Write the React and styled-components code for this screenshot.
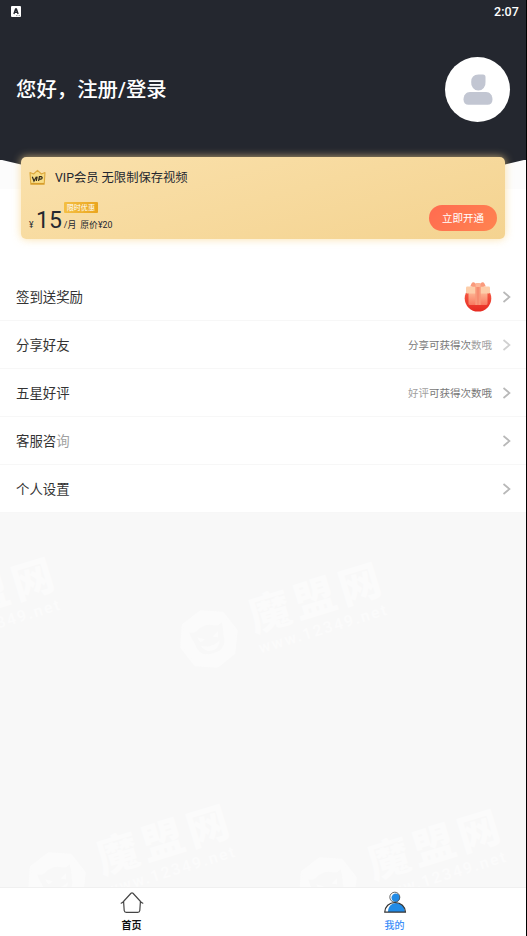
import React from 'react'
import styled, { createGlobalStyle } from 'styled-components'

const menu = [
  { id: 'sign', label: '签到送奖励', gift: true },
  { id: 'share', label: '分享好友', hint: ['', '分享可获得次', '数哦'], pale: true },
  { id: 'rate', label: '五星好评', hint: ['好评', '可获得次数哦', ''] },
  { id: 'service', label: '客服咨', fade: '询' },
  { id: 'settings', label: '个人设置' },
]

const marks = [
  { x: -118, y: 121 },
  { x: 209, y: 126 },
  { x: 57, y: 368 },
  { x: 328, y: 373 },
]

const App = () => {
  const [tab, setTab] = React.useState('mine')

  return (
    <Screen>
      <GlobalStyle />
      <Header>
        <StatusBar>
          <KeyboardIcon />
          <Clock>2:07</Clock>
        </StatusBar>
        <Profile>
          <Greeting>您好，注册/登录</Greeting>
          <Avatar>
            <AvatarIcon />
          </Avatar>
        </Profile>
      </Header>

      <VipCard>
        <VipTitle>
          <CrownIcon />
          VIP会员 无限制保存视频
        </VipTitle>
        <VipBottom>
          <Price>
            <Currency>¥</Currency>
            <Amount>15</Amount>
            <PriceSide>
              <Tag>限时优惠</Tag>
              <Unit>/月<span>原价¥20</span></Unit>
            </PriceSide>
          </Price>
          <OpenButton>立即开通</OpenButton>
        </VipBottom>
      </VipCard>

      <Menu>
        {menu.map((item) => (
          <MenuRow key={item.id}>
            <Label>{item.label}{item.fade && <Faded>{item.fade}</Faded>}</Label>
            {item.gift && <GiftIcon />}
            {item.hint && (
              <Hint>
                <Faded>{item.hint[0]}</Faded>{item.hint[1]}<Faded>{item.hint[2]}</Faded>
              </Hint>
            )}
            <Chevron pale={item.pale} />
          </MenuRow>
        ))}
      </Menu>

      <Empty>
        {marks.map((m, i) => (
          <Watermark key={i + 'w'} $x={m.x} $y={m.y}>
            <MarkLogo />
            <div>
              <MarkName>魔盟网</MarkName>
              <MarkUrl>www.12349.net</MarkUrl>
            </div>
          </Watermark>
        ))}
      </Empty>

      <TabBar>
        <Tab onClick={() => setTab('home')} $active={tab === 'home'}>
          <HomeIcon />
          首页
        </Tab>
        <Tab onClick={() => setTab('mine')} $active={tab === 'mine'}>
          <MineIcon />
          我的
        </Tab>
      </TabBar>
    </Screen>
  )
}

export default App

const KeyboardIcon = () => (
  <svg width="10" height="11" viewBox="0 0 10 11">
    <rect width="10" height="11" rx="1" fill="#fff" />
    <path d="M2.9 8 4.6 3h.8l1.7 5M3.6 6.3h2.8" fill="none" stroke="#24272f" strokeWidth="1.4" />
    <path d="M5 9.6h4" stroke="#777a80" strokeWidth=".7" strokeDasharray="1 .5" />
  </svg>
)

const AvatarIcon = () => (
  <svg width="30" height="32" viewBox="0 0 30 32">
    <path d="M15.5 .5H20q2.500 0 2.500 2.500V8a7.200 7.700 0 1 1-14.300 0Q8.200 .5 15.500 .5Z" fill="#c2c6d2" />
    <path d="M7 18h16c4 0 6.500 3.500 6.500 7.500 0 3.500-2 5.300-5 5.300h-19c-3 0-5-1.800-5-5.300 0-4 2.500-7.500 6.500-7.500Z" fill="#c2c6d2" />
  </svg>
)

const CrownIcon = () => (
  <svg width="17" height="17" viewBox="0 0 17 17">
    <path d="M1 3.600 4.600 5 8.500 1.300 12.400 5 16 3.600 15.200 15.300H1.800Z" fill="#f8dc83" stroke="#dca83c" strokeWidth="1.100" strokeLinejoin="round" />
    <path d="M2 14.600h13" stroke="#d79d2c" strokeWidth="1.300" />
    <path d="M3.300 7.700 5 12l2.400-4.300M8.200 7.700 7.300 12M9.600 12l.8-4.300h1.700c1.500 0 1.300 2.500-.3 2.500h-1.500" fill="none" stroke="#30291b" strokeWidth="1.200" />
  </svg>
)

const GiftIcon = () => (
  <svg width="28" height="32" viewBox="0 0 28 32">
    <defs>
      <linearGradient id="ball" x1="0" y1="0" x2="0" y2="1">
        <stop offset="0" stopColor="#fb6a50" />
        <stop offset="1" stopColor="#e62a21" />
      </linearGradient>
      <linearGradient id="box" x1="0" y1="0" x2="0" y2="1">
        <stop offset="0" stopColor="#fdb694" />
        <stop offset="1" stopColor="#f9785f" />
      </linearGradient>
    </defs>
    <circle cx="14" cy="17.300" r="13.300" fill="url(#ball)" />
    <path d="M13.500 5.500C11 .5 8.500 .5 7.300 3L6.200 5.500ZM14.500 5.500C17 .5 19.500 .5 20.700 3L21.800 5.500Z" fill="#fa9a7c" />
    <rect x="4.500" y="11.500" width="19" height="12.500" rx="1.500" fill="url(#box)" />
    <rect x="2" y="5.500" width="24" height="7" rx="1.200" fill="#fdcda9" />
    <path d="M11.300 5.500h5.400V24h-5.400Z" fill="#f8987a" />
    <path d="M14 5.500V24" stroke="#f58066" strokeWidth="1" />
    <rect x="11.500" y="2" width="5" height="4" rx="1" fill="#fdb698" />
  </svg>
)

const Chevron = ({ pale }) => (
  <ChevronSvg width="9" height="12" viewBox="0 0 9 12">
    <path d="m1.500 1 6 5-6 5" fill="none" stroke={pale ? '#d0d0d0' : '#b8b8b8'} strokeWidth="1.700" />
  </ChevronSvg>
)

const MarkLogo = () => (
  <svg width="60" height="60" viewBox="0 0 60 60">
    <path d="M30 1 51 9 59 30 50 51 30 59 9 51 1 30 9 9Z" fill="#fbfbfb" stroke="#fbfbfb" strokeWidth="2" strokeLinejoin="round" />
    <path d="M13 18q4 2 7 1 10-6 20 0 4 1 7-1 0 7-2 12 0 15-15 15t-15-15q-2-5-2-12Z" fill="#f8f8f8" />
    <path d="m19 25 7 4-5 2ZM41 25l-7 4 5 2ZM20 34q10 6 20 0-3 8-10 8t-10-8Z" fill="#fbfbfb" />
  </svg>
)

const HomeIcon = () => (
  <svg width="24" height="23" viewBox="0 0 24 23">
    <path d="m1.200 12.200 1.600-1L11 2.300q1-.8 2 0l8.200 8.900 1.600 1M3.600 10.800l.6 8.700q.2 1.800 2 1.800h11.600q1.800 0 2-1.800l.6-8.700" fill="none" stroke="#454545" strokeWidth="1.200" strokeLinecap="round" />
  </svg>
)

const MineIcon = () => (
  <svg width="24" height="23" viewBox="0 0 24 23">
    <circle cx="12.800" cy="6.700" r="4.300" fill="#228be6" />
    <path d="M5 21c0-5.500 3.500-9 8-9 5 0 8.500 3.500 9 9Z" fill="#228be6" />
    <circle cx="11.800" cy="6.200" r="5" fill="none" stroke="#555" strokeWidth=".9" />
    <path d="M1.700 21.200C2 15.500 6 11.500 12 11.500s10.200 4 10.500 9.700Z" fill="none" stroke="#343434" strokeWidth="1.200" strokeLinejoin="round" />
  </svg>
)

const GlobalStyle = createGlobalStyle`
  body {
    margin: 0;
    font-family: Roboto, "Noto Sans CJK SC", sans-serif;
  }
`

const Screen = styled.div`
  box-sizing: border-box;
  width: 527px;
  height: 936px;
  display: flex;
  flex-direction: column;
  overflow: hidden;
  background: #fff;
  border-right: 1px solid #000;
`

const Header = styled.header`
  height: 189px;
  flex: none;
  color: #fff;
  background: linear-gradient(#24272f 160px, #fcfcfc 160px);
  position: relative;

  /* bulge under the dark area */
  &::after {
    content: '';
    position: absolute;
    top: 159.500px;
    left: 0;
    right: 0;
    height: 16px;
    background: #24272f;
    clip-path: polygon(0 0, 100% 0, 96% 5px, 80% 100%, 20% 100%, 4% 5px);
  }
`

const StatusBar = styled.div`
  height: 22px;
  padding: 0 7px 0 11px;
  display: flex;
  align-items: center;
  justify-content: space-between;
`

const Clock = styled.span`
  font-size: 12.500px;
  font-weight: 500;
  letter-spacing: 0.1px;
`

const Profile = styled.div`
  display: flex;
  align-items: center;
  justify-content: space-between;
  padding: 35px 16px 0;
`

const Greeting = styled.h1`
  margin: 0;
  font-size: 20.400px;
  font-weight: 500;
  line-height: 30px;
`

const Avatar = styled.div`
  width: 65px;
  height: 65px;
  border-radius: 50%;
  background: #fff;
  display: flex;
  align-items: center;
  justify-content: center;
`

const VipCard = styled.section`
  box-sizing: border-box;
  position: relative;
  z-index: 1;
  flex: none;
  height: 82px;
  margin: -32px 21px 0;
  padding: 10px 8px 8px;
  display: flex;
  flex-direction: column;
  justify-content: space-between;
  border-radius: 5px;
  color: #24272f;
  background: linear-gradient(165deg, #fae1ac, #f4d390);
  box-shadow: 0 0 9px rgba(250, 214, 140, 0.75);
`

const VipTitle = styled.div`
  display: flex;
  align-items: center;
  gap: 9px;
  height: 20px;
  font-size: 12.300px;
`

const VipBottom = styled.div`
  display: flex;
  align-items: flex-end;
  justify-content: space-between;
`

const Price = styled.div`
  display: flex;
  align-items: flex-end;
  margin-bottom: -1px;
`

const Currency = styled.span`
  width: 7px;
  font-size: 8.500px;
  line-height: 13px;
`

const Amount = styled.span`
  font-size: 23px;
  line-height: 26px;
  margin-bottom: -2px;
`

const PriceSide = styled.div`
  display: flex;
  flex-direction: column;
  align-items: flex-start;
  gap: 5px;
  margin-left: 2px;
`

const Tag = styled.span`
  width: 34px;
  height: 11px;
  line-height: 11px;
  text-align: center;
  font-size: 7.100px;
  color: #fff;
  background: linear-gradient(90deg, #f4bf43, #eaa51f);
  border-radius: 1px;
`

const Unit = styled.span`
  font-size: 8.800px;
  line-height: 14px;
  white-space: nowrap;

  span {
    margin-left: 4px;
  }
`

const OpenButton = styled.button`
  width: 68px;
  height: 26px;
  padding: 0 0 1px;
  border: none;
  border-radius: 13px;
  color: #fff;
  font-family: inherit;
  font-size: 10.500px;
  background: linear-gradient(135deg, #ff6b50, #ff8350);
  cursor: pointer;
`

const Menu = styled.ul`
  list-style: none;
  margin: 34px 0 0;
  padding: 0;
`

const MenuRow = styled.li`
  box-sizing: border-box;
  height: 48px;
  padding: 0 15px 0 16px;
  display: flex;
  align-items: center;
  border-bottom: 1px solid #f7f7f7;
  cursor: pointer;
`

const Label = styled.span`
  flex: 1;
  padding-bottom: 2px;
  font-size: 13.400px;
  color: #333;
`

const Hint = styled.span`
  font-size: 10.500px;
  color: #777;
`

const Faded = styled.span`
  color: #a0a0a0;
`

const ChevronSvg = styled.svg`
  margin-left: 10px;
`

const Empty = styled.div`
  flex: 1;
  position: relative;
  overflow: hidden;
  background: #f8f8f8;
`

const Watermark = styled.div`
  position: absolute;
  left: ${(props) => props.$x - 30}px;
  top: ${(props) => props.$y - 30}px;
  height: 60px;
  display: flex;
  gap: 15px;
  color: #fbfbfb;
  white-space: nowrap;
  transform: rotate(-17deg);
  transform-origin: 30px 30px;
  user-select: none;
`

const MarkName = styled.div`
  font-size: 42px;
  font-weight: 900;
  line-height: 46px;
  letter-spacing: 5px;
`

const MarkUrl = styled.div`
  font-size: 16px;
  font-weight: 700;
  line-height: 16px;
  letter-spacing: 1.700px;
`

const TabBar = styled.nav`
  box-sizing: border-box;
  flex: none;
  height: 49px;
  display: flex;
  background: #fff;
  border-top: 1px solid #f0f0f0;
`

const Tab = styled.button`
  flex: 1;
  padding: 3px 0 0;
  border: none;
  background: transparent;
  display: flex;
  flex-direction: column;
  align-items: center;
  gap: 4px;
  font-family: inherit;
  font-size: 10px;
  line-height: 15px;
  font-weight: ${(props) => (props.$active ? 500 : 700)};
  color: ${(props) => (props.$active ? '#3d8ef8' : '#111')};
  cursor: pointer;
`
